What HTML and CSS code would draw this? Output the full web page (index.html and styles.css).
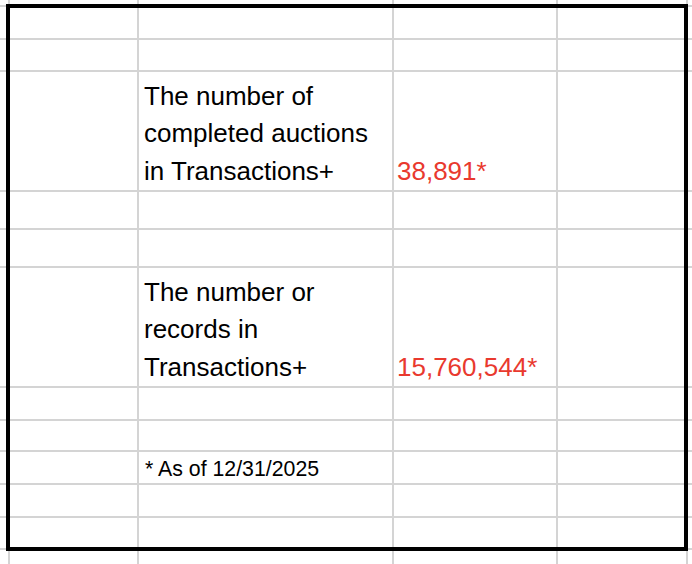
FILE: index.html
```html
<!DOCTYPE html>
<html lang="en">
<head>
<meta charset="utf-8">
<title>Transactions+ statistics</title>
<link rel="stylesheet" href="styles.css">
</head>
<body>
<div class="sheet">
  <!-- row 1 -->
  <div class="c"></div><div class="c"></div><div class="c"></div><div class="c"></div><div class="c"></div><div class="c"></div>
  <!-- row 2 -->
  <div class="c"></div><div class="c"></div><div class="c"></div><div class="c"></div><div class="c"></div><div class="c"></div>
  <!-- row 3 -->
  <div class="c"></div><div class="c"></div><div class="c"></div><div class="c"></div><div class="c"></div><div class="c"></div>
  <!-- row 4 -->
  <div class="c"></div><div class="c"></div>
  <div class="c label">The number of<br>completed auctions<br>in Transactions+</div>
  <div class="c value">38,891*</div>
  <div class="c"></div><div class="c"></div>
  <!-- row 5 -->
  <div class="c"></div><div class="c"></div><div class="c"></div><div class="c"></div><div class="c"></div><div class="c"></div>
  <!-- row 6 -->
  <div class="c"></div><div class="c"></div><div class="c"></div><div class="c"></div><div class="c"></div><div class="c"></div>
  <!-- row 7 -->
  <div class="c"></div><div class="c"></div>
  <div class="c label">The number or<br>records in<br>Transactions+</div>
  <div class="c value">15,760,544*</div>
  <div class="c"></div><div class="c"></div>
  <!-- row 8 -->
  <div class="c"></div><div class="c"></div><div class="c"></div><div class="c"></div><div class="c"></div><div class="c"></div>
  <!-- row 9 -->
  <div class="c"></div><div class="c"></div><div class="c"></div><div class="c"></div><div class="c"></div><div class="c"></div>
  <!-- row 10 -->
  <div class="c"></div><div class="c"></div>
  <div class="c note">* As of 12/31/2025</div>
  <div class="c"></div><div class="c"></div><div class="c"></div>
  <!-- row 11 -->
  <div class="c"></div><div class="c"></div><div class="c"></div><div class="c"></div><div class="c"></div><div class="c"></div>
  <!-- row 12 -->
  <div class="c"></div><div class="c"></div><div class="c"></div><div class="c"></div><div class="c"></div><div class="c"></div>
  <!-- row 13 -->
  <div class="c"></div><div class="c"></div><div class="c"></div><div class="c"></div><div class="c"></div><div class="c"></div>

  <div class="range"></div>
</div>
</body>
</html>
```
FILE: styles.css
```css
html, body {
  margin: 0;
  padding: 0;
  background: #ffffff;
}

body {
  width: 692px;
  height: 564px;
  overflow: hidden;
  font-family: "Liberation Sans", Arial, sans-serif;
  color: #000000;
}

.sheet {
  position: relative;
  display: grid;
  width: 692px;
  height: 564px;
  overflow: hidden;
  background: #d4d4d4;
  gap: 2px;
  grid-template-columns: 8px 127px 253px 162px 128px 1fr;
  grid-template-rows: 5px 31px 30px 118px 36px 36px 118px 31px 29px 31px 31px 30px 1fr;
}

.c {
  background: #ffffff;
  min-width: 0;
  min-height: 0;
}

.label,
.value {
  display: flex;
  align-items: flex-end;
  font-size: 26px;
  line-height: 37.5px;
  white-space: nowrap;
}

.label {
  padding-left: 5px;
}

.value {
  padding-left: 3px;
  color: #e9392e;
}

.note {
  display: flex;
  align-items: flex-end;
  padding-left: 6px;
  padding-bottom: 3px;
  font-size: 21.3px;
  line-height: 21px;
  white-space: nowrap;
}

.range {
  position: absolute;
  grid-column: 2 / 6;
  grid-row: 2 / 13;
  top: -3px;
  bottom: -3px;
  left: -4px;
  right: -2px;
  border: 4px solid #000000;
}
```
